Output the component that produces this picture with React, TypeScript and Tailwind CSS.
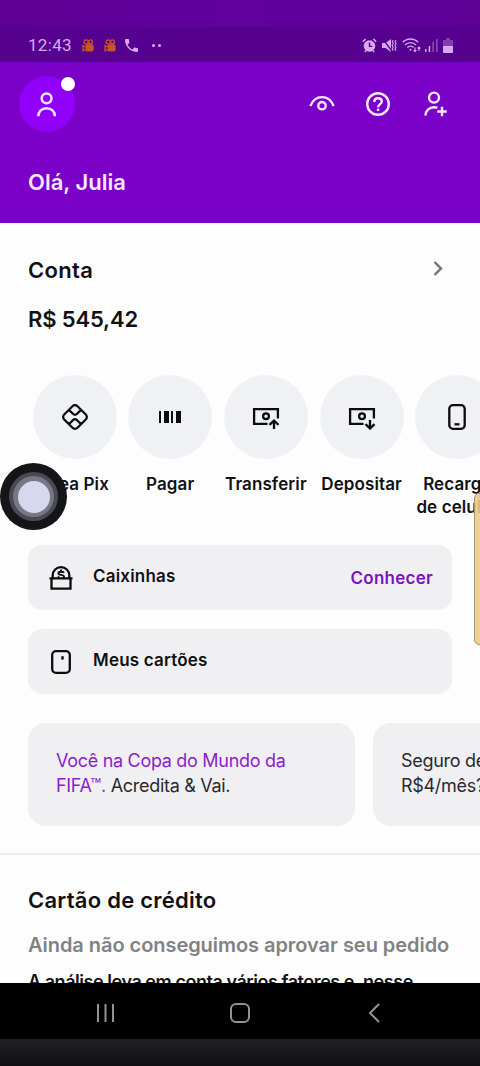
import type { ReactNode } from "react"

const actions: { label: ReactNode; icon: ReactNode }[] = [
  { label: "Área Pix", icon: <PixIcon /> },
  { label: "Pagar", icon: <BarcodeIcon /> },
  { label: "Transferir", icon: <MoneyIcon direction="up" /> },
  { label: "Depositar", icon: <MoneyIcon direction="down" /> },
  {
    label: (
      <>
        Recarga
        <br />
        de celular
      </>
    ),
    icon: <PhoneIcon />,
  },
]

export default function App() {
  return (
    <div className="relative w-[480px] h-[1066px] overflow-hidden flex flex-col bg-[#fdfdfe] font-['Inter',sans-serif] text-[#111113]">
      <StatusBar />
      <Header />

      <main className="h-[760px] shrink-0 overflow-hidden">
        <Account />
        <QuickActions />

        <div className="mt-[26px] mx-7 flex flex-col gap-[19px]">
          <MenuRow icon={<PiggyIcon />} label="Caixinhas" action="Conhecer" />
          <MenuRow icon={<CardIcon />} label="Meus cartões" />
        </div>

        <Promos />
        <CreditCard />
      </main>

      <NavBar />

      {/* Floating assistive button */}
      <div className="absolute left-0 top-[463px] w-[67px] h-[67px] rounded-full bg-[#141518] flex items-center justify-center">
        <div className="w-[49px] h-[49px] rounded-full bg-[#4b4a54] flex items-center justify-center">
          <div className="w-[41px] h-[41px] rounded-full bg-[#787787] flex items-center justify-center">
            <div className="w-8 h-8 rounded-full bg-[#d6d8ee]" />
          </div>
        </div>
      </div>

      {/* Edge panel handle */}
      <div className="absolute left-[474px] top-[493px] w-3 h-[152px] rounded-[5px] border border-[#a99671] bg-[#eacb8b]/90" />
    </div>
  )
}

function StatusBar() {
  return (
    <div className="shrink-0">
      <div className="h-[27px] bg-gradient-to-r from-[#5e0095] via-[#60009d] to-[#5c0096]" />
      <div className="h-[35px] pt-px pl-7 pr-[27px] flex items-center justify-between bg-[#55008f] text-[#d9a9f2]">
        <div className="flex items-center">
          <span className="w-[54px] font-['Roboto',sans-serif] text-[17px] tracking-[0.3px] leading-none">12:43</span>
          <KwaiIcon />
          <span className="w-[10px]" />
          <KwaiIcon />
          <svg className="ml-[9px]" width="13" height="13" viewBox="3 3 18 18" fill="currentColor">
            <path d="M6.62 10.79c1.44 2.83 3.76 5.14 6.59 6.59l2.2-2.2c.27-.27.67-.36 1.02-.24 1.12.37 2.33.57 3.57.57.55 0 1 .45 1 1V20c0 .55-.45 1-1 1C10.61 21 3 13.39 3 4c0-.55.45-1 1-1h3.5c.55 0 1 .45 1 1 0 1.25.2 2.45.57 3.57.11.35.03.74-.25 1.02z" />
          </svg>
          <span className="ml-[14px] w-[3px] h-[3px] rounded-full bg-current" />
          <span className="ml-[3px] w-[3px] h-[3px] rounded-full bg-current" />
        </div>

        <div className="flex items-center gap-[5px]">
          <AlarmIcon />
          <MuteIcon />
          <WifiIcon />
          <SignalIcon />
          <svg width="10" height="15" viewBox="0 0 10 15" fill="currentColor">
            <path opacity=".35" d="M3 0h4v2h3v6H0V2h3z" />
            <path d="M0 8h10v6a1 1 0 0 1-1 1H1a1 1 0 0 1-1-1z" />
          </svg>
        </div>
      </div>
    </div>
  )
}

function Header() {
  return (
    <header className="h-[161px] shrink-0 bg-[#7b00c8] text-[#f8e8ff]">
      <div className="pt-[14px] pl-[19px] pr-[33px] flex items-center justify-between">
        <div className="relative w-14 h-14 rounded-full bg-[#9100f8] flex items-center justify-center">
          <svg width="20" height="25" viewBox="0 0 20 25" fill="none" stroke="currentColor" strokeWidth="2.5">
            <circle cx="9.6" cy="6.3" r="4.9" />
            <path d="M1.3 24.3c0-4.9 3.5-8.1 8.3-8.1s8.3 3.2 8.3 8.1" />
          </svg>
          <span className="absolute left-[42px] top-px w-[14px] h-[14px] rounded-full bg-white" />
        </div>

        <div className="flex items-center">
          <svg className="-mt-[2px]" width="26" height="16" viewBox="0 0 26 16" fill="none" stroke="currentColor" strokeWidth="2.4">
            <path d="M1.4 11C3.6 5.2 7.8 2.1 13 2.1S22.4 5.2 24.6 11" />
            <circle cx="13" cy="10.7" r="3.7" />
          </svg>
          <svg className="ml-[30px]" width="26" height="26" viewBox="0 0 26 26" fill="none" stroke="currentColor" strokeWidth="2.4">
            <circle cx="13" cy="13" r="10.8" />
            <path d="M9.3 11c0-2.2 1.500-3.700 3.800-3.700s3.700 1.400 3.700 3.300c0 2.600-3.700 2.500-3.700 5.600" />
            <path d="M13.100 17.500v2.500" />
          </svg>
          <svg className="ml-8 -mr-[1px]" width="25" height="26" viewBox="0 0 25 26" fill="none" stroke="currentColor" strokeWidth="2.4">
            <circle cx="11" cy="6.600" r="5" />
            <path d="M2.500 24.500c0-5 3.600-8.200 8.500-8.200 1.300 0 2.300.1 3.300.6M19 15.700v9.600M14.200 20.500h9.600" />
          </svg>
        </div>
      </div>

      <h1 className="mt-[35px] ml-7 text-[22px] leading-[30px] font-[560]">Olá, Julia</h1>
    </header>
  )
}

function Account() {
  return (
    <section className="pt-8 px-7">
      <div className="flex items-center justify-between pr-[9px]">
        <h2 className="text-[22px] leading-[30px] font-[560] tracking-[0.3px]">Conta</h2>
        <svg className="-mt-1" width="10" height="15" viewBox="0 0 10 15" fill="none" stroke="#737376" strokeWidth="2.4">
          <path d="m1.500 1 6.500 6.500L1.500 14" />
        </svg>
      </div>
      <p className="mt-[19px] text-[22px] leading-[30px] font-[560] tracking-[-0.15px]">R$ 545,42</p>
    </section>
  )
}

function QuickActions() {
  return (
    <section className="mt-[41px] pl-[32.5px] flex gap-[11.700px]">
      {actions.map((action, i) => (
        <div key={i} className="w-[84px] h-[144px] shrink-0 flex flex-col items-center">
          <div className="w-[84px] h-[84px] shrink-0 rounded-full bg-[#f0f1f4] flex items-center justify-center">{action.icon}</div>
          <p className="mt-[14px] text-[17px] leading-[22.5px] font-[560] tracking-[0.1px] text-center whitespace-nowrap">{action.label}</p>
        </div>
      ))}
    </section>
  )
}

function MenuRow({ icon, label, action }: { icon: ReactNode; label: string; action?: string }) {
  return (
    <div className="h-[65px] pl-5 pr-[19px] flex items-center rounded-[14px] bg-[#f0f0f3]">
      <div className="w-[26px] flex justify-center">{icon}</div>
      <span className="ml-[19px] -mt-px text-[17px] font-[560] tracking-[0.2px]">{label}</span>
      {action && <span className="ml-auto mt-[2px] text-[17px] font-[580] tracking-[0.25px] text-[#7d12bd]">{action}</span>}
    </div>
  )
}

function Promos() {
  return (
    <div className="mt-[29px] pl-7 flex gap-[18px] text-[18px] leading-[25px] tracking-[-0.3px] text-[#2a2a2d]">
      <div className="w-[327px] h-[103px] shrink-0 pt-[25px] pl-7 rounded-[18px] bg-[#f0f0f3] whitespace-nowrap">
        <span className="text-[#8b1ec9]">
          Você na Copa do Mundo da
          <br />
          FIFA™.
        </span>{" "}
        Acredita &amp; Vai.
      </div>
      <div className="w-[327px] h-[103px] shrink-0 pt-[25px] pl-7 rounded-[18px] bg-[#f0f0f3]">
        Seguro de vida por
        <br />
        R$4/mês? Conheça
      </div>
    </div>
  )
}

function CreditCard() {
  return (
    <section className="mt-[27px] pt-[30px] px-7 border-t-2 border-[#eeeff1] whitespace-nowrap">
      <h2 className="text-[22px] leading-[30px] font-[560] tracking-[0.25px]">Cartão de crédito</h2>
      <p className="mt-[17px] text-[20px] leading-[26px] font-[560] tracking-[-0.05px] text-[#828284]">Ainda não conseguimos aprovar seu pedido</p>
      <p className="mt-3 text-[18px] leading-[24px] font-[560] tracking-[-0.45px]">A análise leva em conta vários fatores e, nesse</p>
    </section>
  )
}

function NavBar() {
  return (
    <footer className="shrink-0">
      <div className="h-14 pt-1 px-24 bg-black text-[#929292] flex items-center justify-between">
        <svg width="20" height="20" viewBox="0 0 20 20" fill="none" stroke="currentColor" strokeWidth="2">
          <path d="M2 1v18M9.500 1v18M17 1v18" />
        </svg>
        <svg width="20" height="20" viewBox="0 0 20 20" fill="none" stroke="currentColor" strokeWidth="2">
          <rect x="1" y="1" width="18" height="18" rx="5" />
        </svg>
        <svg width="20" height="20" viewBox="0 0 20 20" fill="none" stroke="currentColor" strokeWidth="2">
          <path d="m15 1-9 9 9 9" />
        </svg>
      </div>
      <div className="h-[27px] bg-gradient-to-b from-[#222224] to-[#101012]" />
    </footer>
  )
}

function PixIcon() {
  return (
    <svg width="28" height="28" viewBox="0 0 28 28" fill="none" stroke="#0c0c0d" strokeWidth="2.3" strokeLinejoin="round">
      <path d="M11.500 3.200a3.500 3.500 0 0 1 5 0l8.300 8.300a3.500 3.500 0 0 1 0 5l-8.300 8.300a3.500 3.500 0 0 1-5 0l-8.300-8.300a3.500 3.500 0 0 1 0-5z" />
      <path d="M7.300 7.400c3.400.2 3.800 4.400 6.700 4.400s3.300-4.200 6.700-4.400M7.300 20.600c3.400-.2 3.800-4.400 6.700-4.400s3.300 4.200 6.700 4.400" />
    </svg>
  )
}

function BarcodeIcon() {
  return (
    <svg width="22" height="12" viewBox="0 0 22 12" fill="#0c0c0d">
      <path d="M0 0h2v12H0zM5 0h5v12H5zM12 0h2v12h-2zM17 0h5v12h-5z" />
    </svg>
  )
}

function MoneyIcon({ direction }: { direction: "up" | "down" }) {
  return (
    <svg className="mt-[2px]" width="28" height="24" viewBox="0 0 28 24" fill="none" stroke="#0c0c0d" strokeWidth="2.3">
      <path d="M15.500 17.800H2.100V3.100h23.800v9.400" />
      <circle cx="14" cy="10.300" r="2.900" />
      {direction === "up" ? <path d="M22 23v-8M17.500 18.800 22 14.500l4.500 4.300" /> : <path d="M22 14v8M17.500 18.200l4.500 4.300 4.500-4.300" />}
    </svg>
  )
}

function PhoneIcon() {
  return (
    <svg width="18" height="26" viewBox="0 0 18 26" fill="none" stroke="#0c0c0d" strokeWidth="2.3">
      <rect x="1.300" y="1.200" width="15.400" height="23.600" rx="3.600" />
      <path d="M6.500 20.300h5" />
    </svg>
  )
}

function PiggyIcon() {
  return (
    <svg width="24" height="26" viewBox="0 0 24 26" fill="none" stroke="#0c0c0d" strokeWidth="2.300">
      <path d="M.5 13.300h23M2.500 13.300v10.400h19V13.300M3.700 13V10.400a8.300 8.300 0 0 1 16.600 0V13" />
      <path strokeWidth="1.900" d="M15 7.800c-.7-1.200-5.400-1.600-5.600.5-.2 2.200 5.600 1 5.600 3.200 0 .8-.6 1.400-1.200 1.800M12.100 4.600v2M8.800 11.500c.4.7 1 1.100 1.600 1.400" />
    </svg>
  )
}

function CardIcon() {
  return (
    <svg width="20" height="24" viewBox="0 0 20 24" fill="none" stroke="#0c0c0d" strokeWidth="2.300">
      <rect x="1.200" y="1.200" width="17.600" height="21.600" rx="3.800" />
      <path strokeWidth="2.400" d="M11.500 6.200v3.400" />
    </svg>
  )
}

function KwaiIcon() {
  return (
    <svg width="12" height="13" viewBox="0 0 12 13" fill="none" stroke="#c9571f" strokeWidth="1.300">
      <circle cx="4.200" cy="3" r="2.100" />
      <circle cx="8.500" cy="2.800" r="1.900" />
      <rect x="4.200" y="5.800" width="6.800" height="6" rx="1.400" fill="#c9571f" />
      <path d="M4.200 8 1 6.800v4.900l3.200-1.200" />
    </svg>
  )
}

function AlarmIcon() {
  return (
    <svg width="15" height="15" viewBox="0 0 15 15">
      <circle cx="7.500" cy="8" r="5.800" fill="currentColor" />
      <path d="M.8 3.600 3.600 1M14.200 3.600 11.400 1M2.800 14l1.600-1.800M12.200 14l-1.600-1.800" stroke="currentColor" strokeWidth="1.500" />
      <path d="M7.500 4.600v3.800h2.800" fill="none" stroke="#55008f" strokeWidth="1.400" />
    </svg>
  )
}

function MuteIcon() {
  return (
    <svg width="15" height="15" viewBox="0 0 15 15" fill="none" stroke="currentColor">
      <path d="M0 5h3.500L9 1v13l-5.500-4H0z" fill="currentColor" stroke="none" />
      <path d="m.8.8 9.400 12.700" stroke="#55008f" strokeWidth="1.300" />
      <path d="m11.200 2-1 1.800 1 1.800-1 1.800 1 1.800-1 1.800 1 1.800M14 2l-1 1.800 1 1.800-1 1.800 1 1.800-1 1.800 1 1.800" strokeWidth="1.100" />
    </svg>
  )
}

function WifiIcon() {
  return (
    <svg className="-mr-px" width="19" height="15" viewBox="0 0 19 15" fill="none" stroke="currentColor" strokeWidth="1.300">
      <path d="M.7 4.300c4.200-4.400 11.300-4.400 15.500 0M3 7c3-3.200 8-3.200 11 0M5.300 9.500c1.800-1.900 4.600-1.900 6.300 0" />
      <circle cx="8.500" cy="11.700" r="1" fill="currentColor" stroke="none" />
      <path d="M13 9.500v4M11.600 12l1.400 1.600 1.400-1.600M17 13V9M15.600 10.500 17 9l1.400 1.500" strokeWidth="1.100" />
    </svg>
  )
}

function SignalIcon() {
  return (
    <svg width="13" height="14" viewBox="0 0 13 14" fill="currentColor">
      <path d="M0 11h1.500v3H0zM3.700 8h1.500v6H3.700z" />
      <path opacity=".45" d="M7.400 4h1.500v10H7.400zM11.100 1h1.500v13h-1.500z" />
    </svg>
  )
}
